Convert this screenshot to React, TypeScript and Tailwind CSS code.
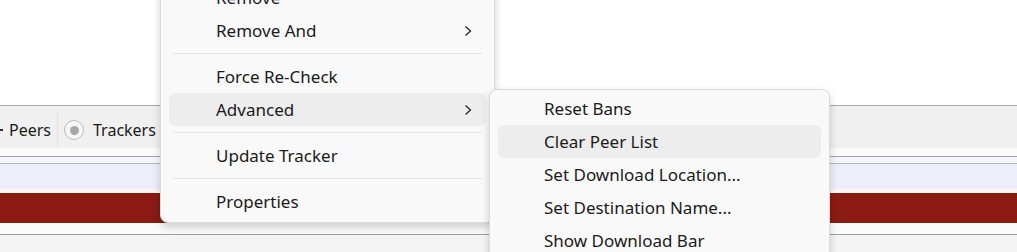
import React from "react";

const FONT = { fontFamily: '"Segoe UI", "Noto Sans", "Open Sans", sans-serif' };

type Entry = { label: string; sub?: boolean; active?: boolean } | "sep";

const MAIN: Entry[] = [
  { label: "Remove" },
  { label: "Remove And", sub: true },
  "sep",
  { label: "Force Re-Check" },
  { label: "Advanced", sub: true, active: true },
  "sep",
  { label: "Update Tracker" },
  "sep",
  { label: "Properties" },
];

const ADVANCED: Entry[] = [
  { label: "Reset Bans" },
  { label: "Clear Peer List", active: true },
  { label: "Set Download Location..." },
  { label: "Set Destination Name..." },
  { label: "Show Download Bar" },
];

function Chevron() {
  return (
    <svg viewBox="0 0 8 12" className="h-3 w-2" fill="none" stroke="#262626" strokeWidth="1.3" aria-hidden="true">
      <path d="M1.5 1.5l5 4.5-5 4.5" />
    </svg>
  );
}

function MenuItems({ items, indent }: { items: Entry[]; indent: string }) {
  return (
    <>
      {items.map((item, i) =>
        item === "sep" ? (
          <div key={i} className="flex h-[13px] items-center px-3">
            <div className="h-px w-full bg-[#e3e3e3]" />
          </div>
        ) : (
          <div
            key={i}
            className={[
              "mx-2 flex h-[33px] items-center justify-between rounded-md pr-[14px] text-[17px] text-[#1b1b1b]",
              indent,
              item.active ? "bg-[#ededed]" : "",
            ].join(" ")}
          >
            <span>{item.label}</span>
            {item.sub && <Chevron />}
          </div>
        ),
      )}
    </>
  );
}

export default function App() {
  return (
    <div className="relative h-[252px] w-[1017px] overflow-hidden bg-white" style={FONT}>
      {/* background window content */}
      <div className="flex flex-col">
        <div className="h-[105px] bg-white" />
        <div className="h-px bg-[#a9a9a9]" />
        <div className="flex h-[42px] items-center bg-[#f0f0f0] pt-[6px] text-[16px] text-[#1b1b1b]">
          <div className="flex h-full items-center">
            <span className="mr-[6px] h-[2px] w-[3px] bg-[#333]" />
            <span>Peers</span>
          </div>
          <div className="ml-[6px] h-full w-px bg-[#e2e2e2]" />
          <div className="flex h-full items-center pl-[6px]">
            <span className="flex h-5 w-5 items-center justify-center rounded-full border border-[#b9b9b9] bg-[#f7f7f7]">
              <span className="h-[9px] w-[9px] rounded-full bg-[#a8a8a8]" />
            </span>
            <span className="ml-[9px]">Trackers</span>
          </div>
        </div>
        <div className="h-[8px] bg-[#fafafa]" />
        <div className="h-px bg-[#a4a4a4]" />
        <div className="h-[6px] bg-[#f5f5fb]" />
        <div className="h-px bg-[#b4b4bc]" />
        <div className="h-[25px] bg-[#eeeefb]" />
        <div className="h-[4px] bg-[#fbf5f5]" />
        <div className="h-[30px] bg-[#8b1b12]" />
        <div className="h-[11px] bg-[#fafafa]" />
        <div className="h-px bg-[#9e9e9e]" />
        <div className="h-[20px] bg-[#f4f4f4]" />
      </div>

      {/* main context menu */}
      <div className="absolute left-[160px] top-[-24px] w-[335px] rounded-lg border border-[#dcdcdc] bg-[#f9f9f9] pb-1 pt-1 shadow-[0_4px_8px_rgba(0,0,0,0.18)]">
        <MenuItems items={MAIN} indent="pl-[47px]" />
      </div>

      {/* Advanced submenu */}
      <div className="absolute left-[489px] top-[89px] w-[341px] rounded-lg border border-[#dcdcdc] bg-[#f9f9f9] pb-1 pt-[2px] shadow-[0_4px_8px_rgba(0,0,0,0.18)]">
        <MenuItems items={ADVANCED} indent="pl-[46px]" />
      </div>
    </div>
  );
}
